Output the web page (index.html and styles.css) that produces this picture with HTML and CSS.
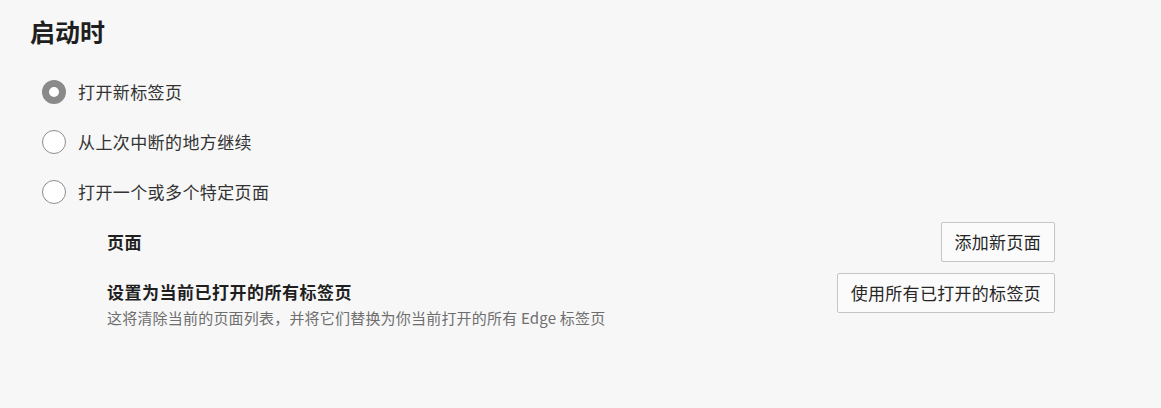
FILE: index.html
```html
<!DOCTYPE html>
<html lang="zh-CN">
<head>
<meta charset="utf-8">
<link rel="stylesheet" href="styles.css">
</head>
<body>
<main class="page">
  <h1 class="title">启动时</h1>
  <div class="radios">
    <label class="radio-row"><span class="radio checked"></span><span class="radio-label">打开新标签页</span></label>
    <label class="radio-row"><span class="radio"></span><span class="radio-label">从上次中断的地方继续</span></label>
    <label class="radio-row"><span class="radio"></span><span class="radio-label">打开一个或多个特定页面</span></label>
  </div>
  <div class="sub">
    <div class="sub-row first">
      <div class="sub-text"><div class="sub-title">页面</div></div>
      <button class="btn">添加新页面</button>
    </div>
    <div class="sub-row">
      <div class="sub-text">
        <div class="sub-title">设置为当前已打开的所有标签页</div>
        <div class="sub-desc">这将清除当前的页面列表，并将它们替换为你当前打开的所有 Edge 标签页</div>
      </div>
      <button class="btn">使用所有已打开的标签页</button>
    </div>
  </div>
</main>
</body>
</html>
```
FILE: styles.css
```css
html, body {
  margin: 0;
  padding: 0;
  background: #f7f7f7;
}
body {
  font-family: "Noto Sans CJK SC", "Noto Sans", sans-serif;
  color: #262626;
}
.page {
  width: 1161px;
  height: 408px;
  box-sizing: border-box;
  padding: 12px 106px 0 30px;
}
.title {
  margin: 0;
  font-size: 25px;
  font-weight: 700;
  line-height: 38px;
  color: #1f1f1f;
}
.radios {
  margin-top: 30px;
  display: flex;
  flex-direction: column;
  gap: 26px;
  padding-left: 12px;
}
.radio-row {
  display: flex;
  align-items: center;
  height: 24px;
  gap: 12px;
}
.radio {
  width: 24px;
  height: 24px;
  box-sizing: border-box;
  border-radius: 50%;
  border: 1.5px solid #8c8c8c;
  background: #ffffff;
  flex: none;
}
.radio.checked {
  border: 7px solid #8a8a8a;
}
.radio-label {
  font-size: 17px;
  line-height: 24px;
  color: #333333;
  letter-spacing: 0.4px;
}
.sub {
  margin-top: 18px;
  padding-left: 77px;
  display: flex;
  flex-direction: column;
  gap: 11px;
}
.sub-row {
  display: flex;
  align-items: flex-start;
  justify-content: space-between;
}
.sub-row.first {
  align-items: center;
}
.sub-title {
  font-size: 17px;
  font-weight: 700;
  line-height: 26px;
  color: #1f1f1f;
  letter-spacing: 0.5px;
}
.sub-row:not(.first) .sub-title {
  margin-top: 6px;
}
.sub-desc {
  font-size: 15px;
  line-height: 20px;
  color: #6e6e6e;
  margin-top: 3px;
  letter-spacing: 0.2px;
}
.btn {
  font-family: "Noto Sans CJK SC", "Noto Sans", sans-serif;
  font-size: 17px;
  color: #262626;
  height: 40px;
  padding: 0 13px;
  background: #fbfbfb;
  border: 1px solid #c6c6c6;
  border-radius: 2px;
  line-height: 38px;
  white-space: nowrap;
  letter-spacing: 0.3px;
}
```
